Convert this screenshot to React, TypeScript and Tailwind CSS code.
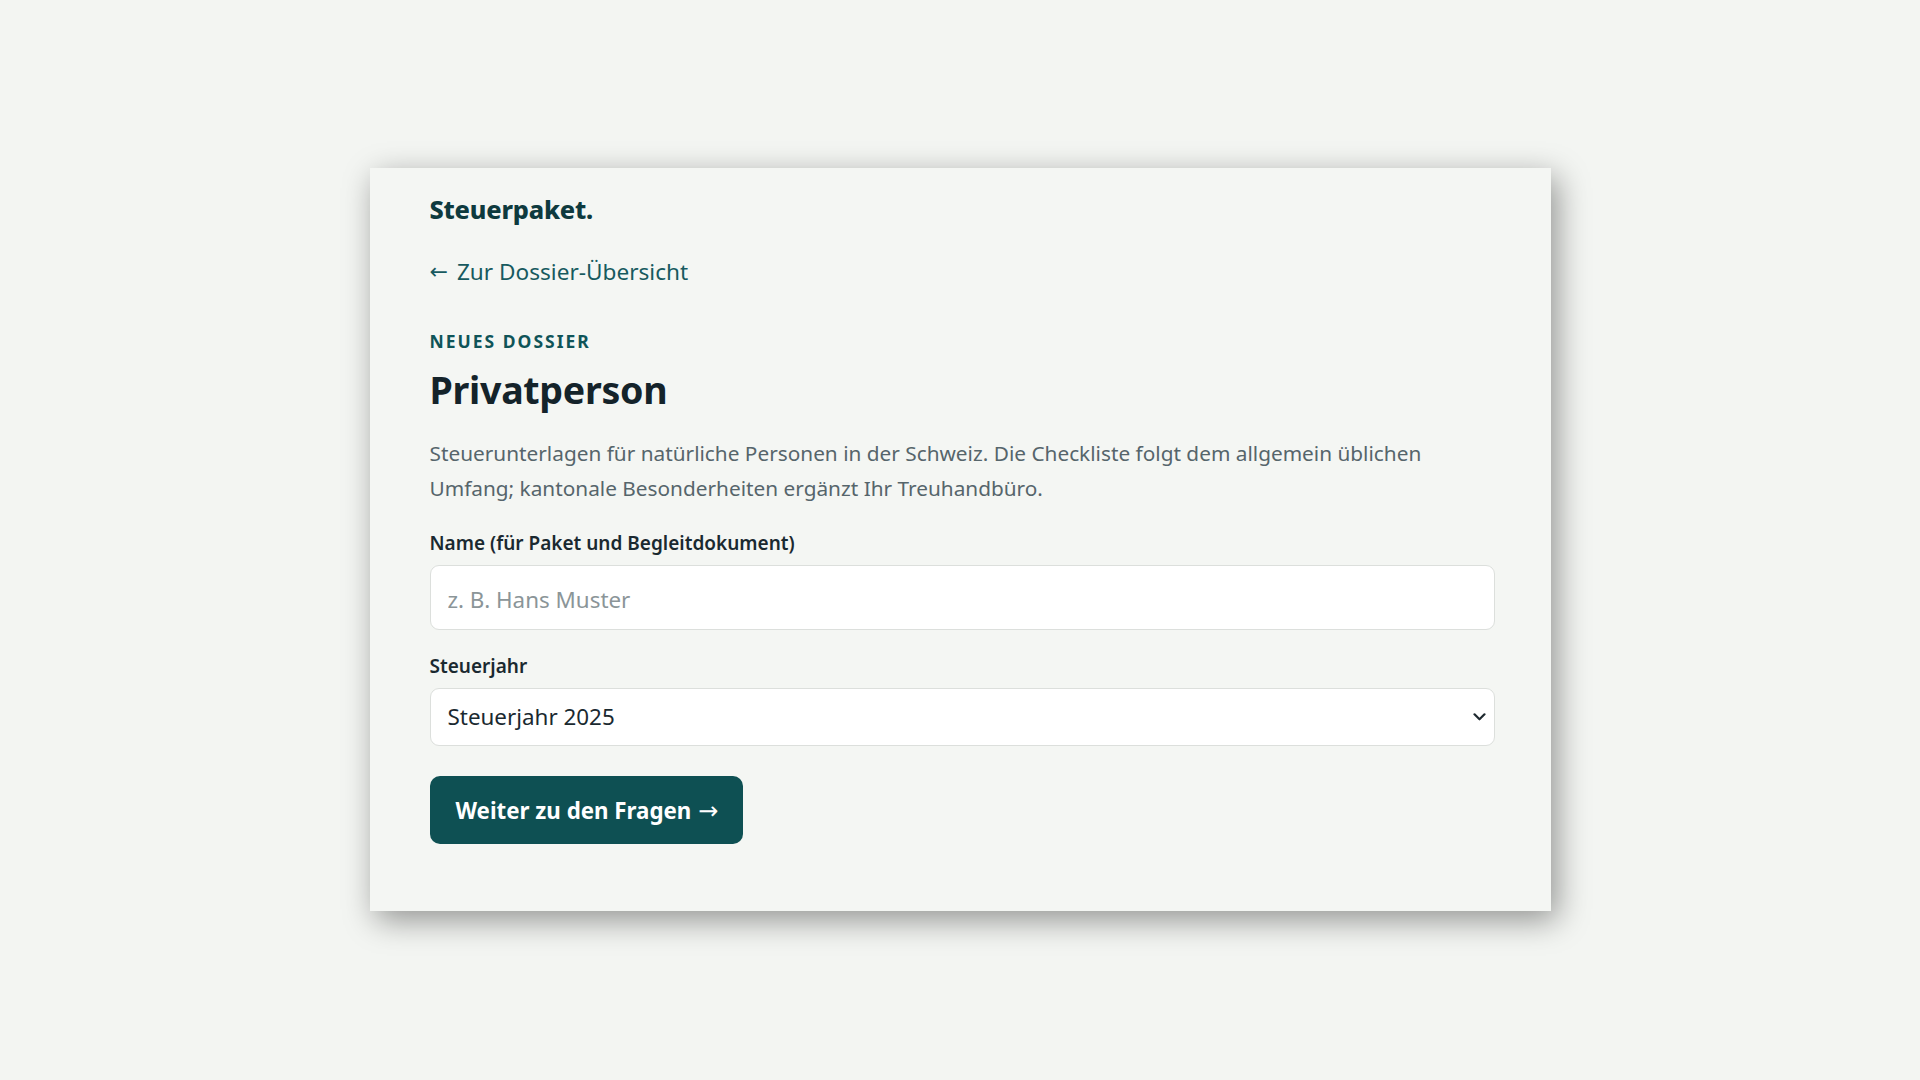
import React from "react";

const arrowFont = { fontFamily: '"DejaVu Sans", sans-serif' };

export default function App() {
  return (
    <div
      className="min-h-screen w-full bg-[#f3f5f2] flex justify-center pt-[168px]"
      style={{ fontFamily: '"Noto Sans", "Open Sans", sans-serif' }}
    >
      <div className="w-[1181px] h-[743px] bg-[#f4f6f3] shadow-[6px_9px_30px_rgba(0,0,0,0.4)] pl-[60px] pr-[56px] pt-[25px] pb-[67px] flex flex-col">
        <div className="text-[25.3px] leading-[32px] font-extrabold text-[#0e3a3e] tracking-[-0.2px]">
          Steuerpaket.
        </div>
        <a
          href="#"
          className="mt-[32px] h-[30px] flex items-center gap-[9px] text-[22.6px] leading-[30px] text-[#175a5f] w-fit"
        >
          <span style={arrowFont} className="text-[22px] leading-none">←</span>
          <span>Zur Dossier-Übersicht</span>
        </a>
        <div className="mt-[42px] text-[17.5px] leading-[24px] font-bold tracking-[2px] uppercase text-[#0f5458]">
          Neues Dossier
        </div>
        <h1 className="mt-[13px] text-[37.6px] leading-[48px] font-bold text-[#14232a] tracking-[-0.3px]">
          Privatperson
        </h1>
        <p className="mt-[22px] text-[20.8px] leading-[35px] text-[#56656b]">
          Steuerunterlagen für natürliche Personen in der Schweiz. Die Checkliste folgt dem allgemein üblichen
          <br />
          Umfang; kantonale Besonderheiten ergänzt Ihr Treuhandbüro.
        </p>
        <label className="mt-[24px] text-[19px] leading-[26px] font-semibold text-[#1a2930]">
          Name (für Paket und Begleitdokument)
        </label>
        <input
          type="text"
          placeholder="z. B. Hans Muster"
          className="mt-[9px] h-[65px] w-full rounded-[9px] border border-[#dcdfdc] bg-white px-[17px] pt-[3px] text-[22.4px] text-[#1a2930] placeholder:text-[#8b9598] outline-none"
        />
        <label className="mt-[23px] text-[19px] leading-[26px] font-semibold text-[#1a2930]">
          Steuerjahr
        </label>
        <div className="relative mt-[9px]">
          <select
            defaultValue="2025"
            className="h-[58px] w-full appearance-none rounded-[9px] border border-[#dcdfdc] bg-white px-[17px] text-[22.4px] text-[#1a2930] outline-none"
          >
            <option value="2025">Steuerjahr 2025</option>
            <option value="2024">Steuerjahr 2024</option>
            <option value="2023">Steuerjahr 2023</option>
          </select>
          <svg
            className="pointer-events-none absolute right-[9px] top-1/2 -translate-y-1/2"
            width="13"
            height="9"
            viewBox="0 0 13 9"
            fill="none"
          >
            <path d="M1.5 1.8 L6.5 6.8 L11.5 1.8" stroke="#1f2a30" strokeWidth="2.2" strokeLinecap="round" strokeLinejoin="round" />
          </svg>
        </div>
        <button
          type="button"
          className="mt-[30px] h-[68px] w-[313px] rounded-[10px] bg-[#0e5053] text-white text-[22.3px] font-bold flex items-center justify-start gap-[7px] pl-[26px] pt-[1px]"
        >
          <span>Weiter zu den Fragen</span>
          <span style={arrowFont} className="text-[24px] leading-none font-normal">→</span>
        </button>
      </div>
    </div>
  );
}
